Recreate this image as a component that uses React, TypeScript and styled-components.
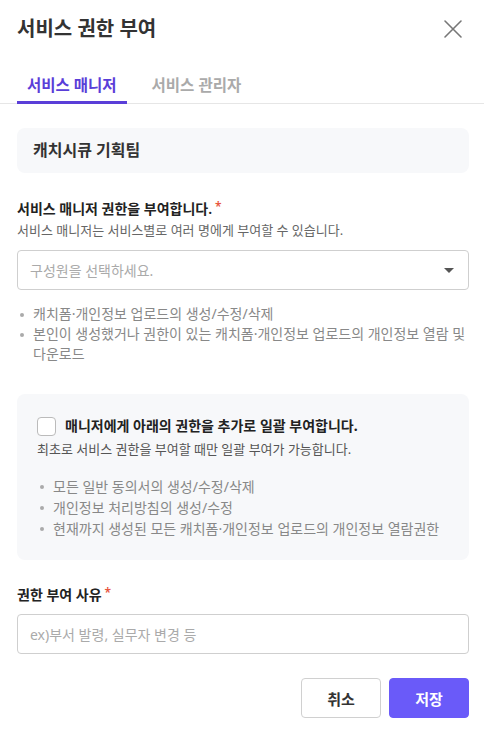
import React from 'react';
import styled, { createGlobalStyle } from 'styled-components';

const GlobalStyle = createGlobalStyle`
  * { box-sizing: border-box; }
  body {
    margin: 0;
    background: #ffffff;
    font-family: "Noto Sans", "Noto Sans CJK KR", sans-serif;
    color: #222;
    word-break: keep-all;
  }
`;

const Modal = styled.div`
  width: 484px;
  min-height: 735px;
  background: #fff;
`;

const Header = styled.div`
  display: flex;
  align-items: flex-start;
  justify-content: space-between;
  padding: 16px 21px 0 17px;
  height: 62px;
`;

const Title = styled.h1`
  margin: 0;
  font-size: 20px;
  line-height: 26px;
  font-weight: 700;
  color: #333;
`;

const CloseButton = styled.button`
  border: 0;
  background: none;
  padding: 0;
  margin-top: 3px;
  width: 20px;
  height: 20px;
  cursor: pointer;
  color: #777;
`;

const TabBar = styled.div`
  display: flex;
  gap: 15px;
  padding: 0 17px;
  border-bottom: 1px solid #e6e6e6;
`;

const Tab = styled.div<{ $active?: boolean }>`
  padding: 12px 10px 5px;
  margin-bottom: -1px;
  font-size: 15.5px;
  line-height: 22px;
  font-weight: 700;
  color: ${({ $active }) => ($active ? '#5a3ed8' : '#aaaaaa')};
  border-bottom: 3px solid ${({ $active }) => ($active ? '#5a3ed8' : 'transparent')};
`;

const Body = styled.div`
  padding: 24px 15px 0 17px;
`;

const TeamCard = styled.div`
  height: 45px;
  padding: 0 16px;
  border-radius: 8px;
  background: #f7f8fa;
  font-size: 16px;
  line-height: 45px;
  font-weight: 700;
  color: #333;
`;

const Label = styled.div<{ $top: number }>`
  margin-top: ${({ $top }) => $top}px;
  font-size: 14px;
  line-height: 22px;
  font-weight: 600;
  color: #222;
`;

const Required = styled.span`
  color: #e8553e;
  font-size: 12px;
  margin-left: 3px;
  vertical-align: 3px;
`;

const Help = styled.div`
  font-size: 13px;
  line-height: 20px;
  color: #666;
`;

const Field = styled.div<{ $top: number }>`
  margin-top: ${({ $top }) => $top}px;
  height: 40px;
  display: flex;
  align-items: center;
  justify-content: space-between;
  padding: 0 14px 0 12px;
  border: 1px solid #cfcfcf;
  border-radius: 4px;
  font-size: 14px;
  color: #aaa;
`;

const Caret = styled.span`
  width: 0;
  height: 0;
  border-left: 5.5px solid transparent;
  border-right: 5.5px solid transparent;
  border-top: 5px solid #555;
`;

const BulletList = styled.ul<{ $top: number; $line: number }>`
  list-style: none;
  margin: ${({ $top }) => $top}px 0 0;
  padding: 0;
  font-size: 14px;
  line-height: ${({ $line }) => $line}px;
  color: #888;

  li {
    position: relative;
    padding-left: 16px;
  }

  li::before {
    content: '';
    position: absolute;
    left: 3px;
    top: ${({ $line }) => $line / 2 - 1.5}px;
    width: 4px;
    height: 4px;
    border-radius: 50%;
    background: #aaa;
  }
`;

const GrayBox = styled.div`
  margin-top: 30px;
  padding: 21px 20px 21px 20px;
  border-radius: 8px;
  background: #f7f8fa;
`;

const CheckRow = styled.label`
  display: flex;
  align-items: center;
  gap: 9px;
  font-size: 14px;
  line-height: 22px;
  font-weight: 700;
  color: #222;
`;

const CheckBox = styled.span`
  width: 19px;
  height: 19px;
  border: 1px solid #bbb;
  border-radius: 4px;
  background: #fff;
`;

const BoxHelp = styled(Help)`
  margin-top: 2px;
  color: #555;
`;

const Footer = styled.div`
  display: flex;
  justify-content: flex-end;
  gap: 8px;
  margin-top: 24px;
  padding-bottom: 15px;
`;

const Button = styled.button<{ $primary?: boolean }>`
  width: 80px;
  height: 40px;
  border-radius: 4px;
  font-family: inherit;
  font-size: 15px;
  font-weight: 700;
  cursor: pointer;
  border: 1px solid ${({ $primary }) => ($primary ? '#6a5af9' : '#d0d0d0')};
  background: ${({ $primary }) => ($primary ? '#6a5af9' : '#fff')};
  color: ${({ $primary }) => ($primary ? '#fff' : '#333')};
`;

export default function App() {
  return (
    <>
      <GlobalStyle />
      <Modal>
        <Header>
          <Title>서비스 권한 부여</Title>
          <CloseButton aria-label="닫기">
            <svg width="20" height="20" viewBox="0 0 20 20" fill="none">
              <path d="M2 2L18 18M18 2L2 18" stroke="currentColor" strokeWidth="1.6" strokeLinecap="round" />
            </svg>
          </CloseButton>
        </Header>
        <TabBar>
          <Tab $active>서비스 매니저</Tab>
          <Tab>서비스 관리자</Tab>
        </TabBar>
        <Body>
          <TeamCard>캐치시큐 기획팀</TeamCard>

          <Label $top={23}>
            서비스 매니저 권한을 부여합니다.<Required>*</Required>
          </Label>
          <Help>서비스 매니저는 서비스별로 여러 명에게 부여할 수 있습니다.</Help>
          <Field $top={10}>
            구성원을 선택하세요.
            <Caret />
          </Field>
          <BulletList $top={14} $line={20}>
            <li>캐치폼·개인정보 업로드의 생성/수정/삭제</li>
            <li>본인이 생성했거나 권한이 있는 캐치폼·개인정보 업로드의 개인정보 열람 및 다운로드</li>
          </BulletList>

          <GrayBox>
            <CheckRow>
              <CheckBox />
              매니저에게 아래의 권한을 추가로 일괄 부여합니다.
            </CheckRow>
            <BoxHelp>최초로 서비스 권한을 부여할 때만 일괄 부여가 가능합니다.</BoxHelp>
            <BulletList $top={17} $line={21}>
              <li>모든 일반 동의서의 생성/수정/삭제</li>
              <li>개인정보 처리방침의 생성/수정</li>
              <li>현재까지 생성된 모든 캐치폼·개인정보 업로드의 개인정보 열람권한</li>
            </BulletList>
          </GrayBox>

          <Label $top={22}>
            권한 부여 사유<Required>*</Required>
          </Label>
          <Field $top={8}>ex)부서 발령, 실무자 변경 등</Field>

          <Footer>
            <Button>취소</Button>
            <Button $primary>저장</Button>
          </Footer>
        </Body>
      </Modal>
    </>
  );
}
